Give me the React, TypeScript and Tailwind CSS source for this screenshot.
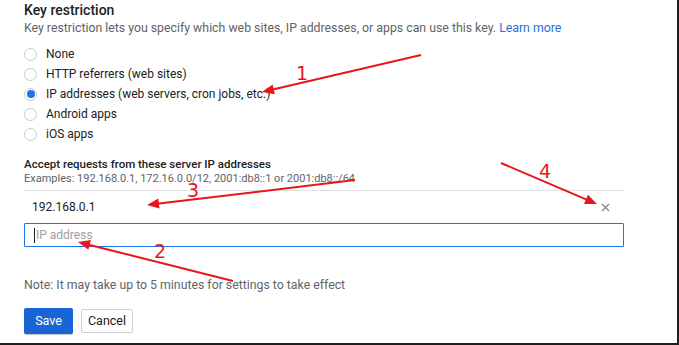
import React from "react";

const radios = [
  { label: "None", checked: false },
  { label: "HTTP referrers (web sites)", checked: false },
  { label: "IP addresses (web servers, cron jobs, etc.)", checked: true },
  { label: "Android apps", checked: false },
  { label: "iOS apps", checked: false },
];

function Radio({ checked }: { checked: boolean }) {
  return (
    <span className="flex h-[13px] w-[13px] items-center justify-center rounded-full border border-[#c8c8c8] bg-white">
      {checked && <span className="h-[8px] w-[8px] rounded-full bg-[#1a73e8]" />}
    </span>
  );
}

function Arrow({ x1, y1, x2, y2 }: { x1: number; y1: number; x2: number; y2: number }) {
  const dx = x2 - x1;
  const dy = y2 - y1;
  const len = Math.hypot(dx, dy);
  const ux = dx / len;
  const uy = dy / len;
  const hl = 12;
  const hw = 5;
  const bx = x2 - ux * hl;
  const by = y2 - uy * hl;
  const p1 = `${bx - uy * hw},${by + ux * hw}`;
  const p2 = `${bx + uy * hw},${by - ux * hw}`;
  return (
    <g>
      <line x1={x1} y1={y1} x2={bx + ux * 2} y2={by + uy * 2} stroke="#e8161c" strokeWidth={2} />
      <polygon points={`${x2},${y2} ${p1} ${p2}`} fill="#e8161c" />
    </g>
  );
}

export default function App() {
  return (
    <div
      className="relative h-[345px] w-[679px] overflow-hidden border-b-2 border-r-2 border-[#202020] bg-white text-[#202124]"
      style={{ fontFamily: "Roboto, 'Liberation Sans', sans-serif" }}
    >
      <div className="pl-[24px]">
        <div className="text-[14px] font-medium leading-[20px]">Key restriction</div>
        <div className="text-[12.3px] leading-[16px] text-[#5f6368]">
          Key restriction lets you specify which web sites, IP addresses, or apps can use this key.{" "}
          <span className="text-[#1a73e8]">Learn more</span>
        </div>
        <div className="mt-[8px] flex flex-col">
          {radios.map((r) => (
            <div key={r.label} className="flex h-[20px] items-center">
              <span className="ml-[-1px] mr-[8px] flex w-[15px] items-center justify-center">
                <Radio checked={r.checked} />
              </span>
              <span className="text-[12px] leading-[16px] text-[#202124]">{r.label}</span>
            </div>
          ))}
        </div>
        <div className="mt-[12px] text-[11.5px] font-medium leading-[16px]">
          Accept requests from these server IP addresses
        </div>
        <div className="text-[11px] leading-[14px] text-[#5f6368]">
          Examples: 192.168.0.1, 172.16.0.0/12, 2001:db8::1 or 2001:db8::/64
        </div>
        <div className="mt-[4px] w-[600px] border-t border-[#e0e0e0]">
          <div className="flex h-[32px] items-center justify-between pl-[8px] pr-[14px]">
            <span className="text-[12px]">192.168.0.1</span>
            <svg width="9" height="9" viewBox="0 0 9 9">
              <path d="M1 1 L8 8 M8 1 L1 8" stroke="#8a8a8a" strokeWidth="1.4" />
            </svg>
          </div>
          <div className="flex h-[24px] items-center rounded-[1px] border border-[#1a73e8] pl-[9px]">
            <span className="mr-[1px] h-[15px] w-[1px] bg-[#202124]" />
            <span className="text-[12px] text-[#a0a0a0]">IP address</span>
          </div>
        </div>
        <div className="mt-[30px] text-[12.3px] leading-[16px] text-[#5f6368]">
          Note: It may take up to 5 minutes for settings to take effect
        </div>
        <div className="mt-[15px] flex items-center gap-[8px]">
          <button className="h-[26px] w-[49px] rounded-[2px] bg-[#1a65d6] text-[12.5px] text-white shadow-[0_1px_1px_rgba(0,0,0,0.25)]">
            Save
          </button>
          <button className="h-[24px] w-[52px] rounded-[2px] border border-[#d0d0d0] bg-white text-[12.5px] text-[#202124]">
            Cancel
          </button>
        </div>
      </div>

      <svg className="pointer-events-none absolute left-0 top-0" width="679" height="345">
        <Arrow x1={421} y1={55} x2={262} y2={92} />
        <Arrow x1={233} y1={281} x2={78} y2={242} />
        <Arrow x1={355} y1={180} x2={147} y2={205} />
        <Arrow x1={501} y1={163} x2={597} y2={204} />
        <g fill="#e8161c" style={{ fontFamily: "'DejaVu Sans', sans-serif", fontSize: "19px" }}>
          <text x="296" y="80">1</text>
          <text x="154" y="258">2</text>
          <text x="187" y="197">3</text>
          <text x="539" y="178">4</text>
        </g>
      </svg>
    </div>
  );
}
